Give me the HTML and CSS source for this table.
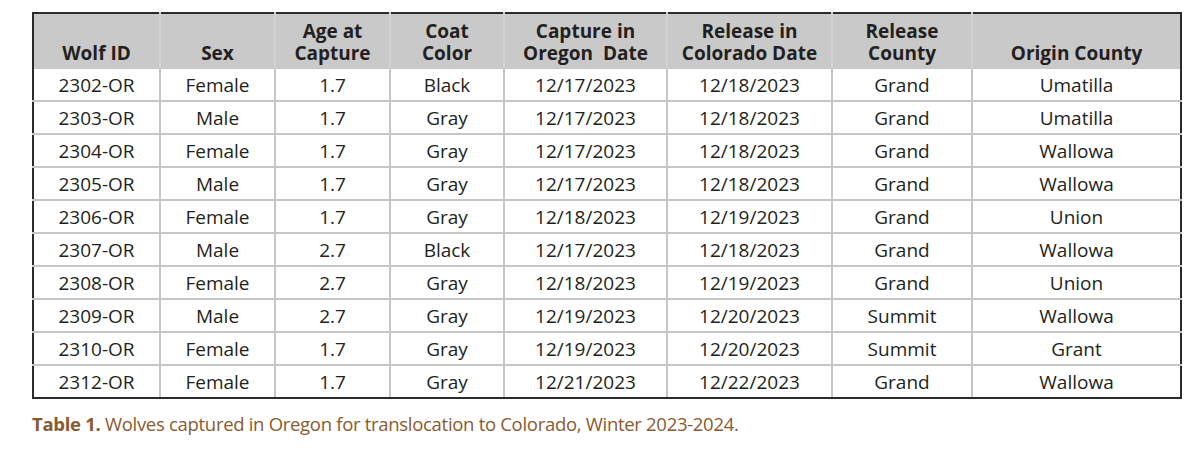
FILE: index.html
```html
<!DOCTYPE html>
<html>
<head>
<meta charset="utf-8">
<link rel="stylesheet" href="styles.css">
</head>
<body>
<div class="wrap">
<table class="wolves">
<colgroup>
<col class="c1"><col class="c2"><col class="c3"><col class="c4"><col class="c5"><col class="c6"><col class="c7"><col class="c8">
</colgroup>
<thead>
<tr>
<th>Wolf ID</th><th>Sex</th><th>Age at<br>Capture</th><th>Coat<br>Color</th><th>Capture in<br>Oregon&nbsp; Date</th><th>Release in<br>Colorado Date</th><th>Release<br>County</th><th>Origin County</th>
</tr>
</thead>
<tbody>
<tr><td>2302-OR</td><td>Female</td><td>1.7</td><td>Black</td><td>12/17/2023</td><td>12/18/2023</td><td>Grand</td><td>Umatilla</td></tr>
<tr><td>2303-OR</td><td>Male</td><td>1.7</td><td>Gray</td><td>12/17/2023</td><td>12/18/2023</td><td>Grand</td><td>Umatilla</td></tr>
<tr><td>2304-OR</td><td>Female</td><td>1.7</td><td>Gray</td><td>12/17/2023</td><td>12/18/2023</td><td>Grand</td><td>Wallowa</td></tr>
<tr><td>2305-OR</td><td>Male</td><td>1.7</td><td>Gray</td><td>12/17/2023</td><td>12/18/2023</td><td>Grand</td><td>Wallowa</td></tr>
<tr><td>2306-OR</td><td>Female</td><td>1.7</td><td>Gray</td><td>12/18/2023</td><td>12/19/2023</td><td>Grand</td><td>Union</td></tr>
<tr><td>2307-OR</td><td>Male</td><td>2.7</td><td>Black</td><td>12/17/2023</td><td>12/18/2023</td><td>Grand</td><td>Wallowa</td></tr>
<tr><td>2308-OR</td><td>Female</td><td>2.7</td><td>Gray</td><td>12/18/2023</td><td>12/19/2023</td><td>Grand</td><td>Union</td></tr>
<tr><td>2309-OR</td><td>Male</td><td>2.7</td><td>Gray</td><td>12/19/2023</td><td>12/20/2023</td><td>Summit</td><td>Wallowa</td></tr>
<tr><td>2310-OR</td><td>Female</td><td>1.7</td><td>Gray</td><td>12/19/2023</td><td>12/20/2023</td><td>Summit</td><td>Grant</td></tr>
<tr><td>2312-OR</td><td>Female</td><td>1.7</td><td>Gray</td><td>12/21/2023</td><td>12/22/2023</td><td>Grand</td><td>Wallowa</td></tr>
</tbody>
</table>
<p class="caption"><b>Table 1.</b> Wolves captured in Oregon for translocation to Colorado, Winter 2023-2024.</p>
</div>
</body>
</html>
```
FILE: styles.css
```css
html, body {
  margin: 0;
  padding: 0;
  background: #ffffff;
}
body {
  font-family: "Open Sans", "Noto Sans", sans-serif;
  color: #231f20;
}
.wrap {
  padding: 12px 0 0 32px;
}
.wolves {
  border-collapse: collapse;
  table-layout: fixed;
  width: 1148px;
  border: 2px solid #2b2b2b;
  font-size: 19px;
}
.c1 { width: 127px; }
.c2 { width: 115px; }
.c3 { width: 115px; }
.c4 { width: 114px; }
.c5 { width: 163px; }
.c6 { width: 165px; }
.c7 { width: 140px; }
.c8 { width: 209px; }
.wolves th {
  background: #c9c9c9;
  font-weight: 700;
  line-height: 22px;
  height: 56px;
  padding: 0 0 5px 0;
  vertical-align: bottom;
  text-align: center;
  border-left: 2px solid #d2d2d2;
  box-sizing: border-box;
}
.wolves th:first-child { border-left: 2px solid #2b2b2b; }
.wolves th:last-child { border-right: 2px solid #2b2b2b; }
.wolves td {
  height: 31px;
  padding: 2px 0 0 0;
  box-sizing: border-box;
  text-align: center;
  line-height: 29px;
  border: 2px solid #c6c6c6;
}
.wolves tbody tr:first-child td { border-top: none; }
.wolves td:first-child { border-left: 2px solid #2b2b2b; }
.wolves td:last-child { border-right: 2px solid #2b2b2b; }
.wolves tbody tr:last-child td { border-bottom: 2px solid #2b2b2b; }
.caption {
  margin: 12px 0 0 0;
  font-size: 18.5px;
  color: #8a5a30;
  letter-spacing: -0.3px;
}
.caption b { font-weight: 700; }
```
